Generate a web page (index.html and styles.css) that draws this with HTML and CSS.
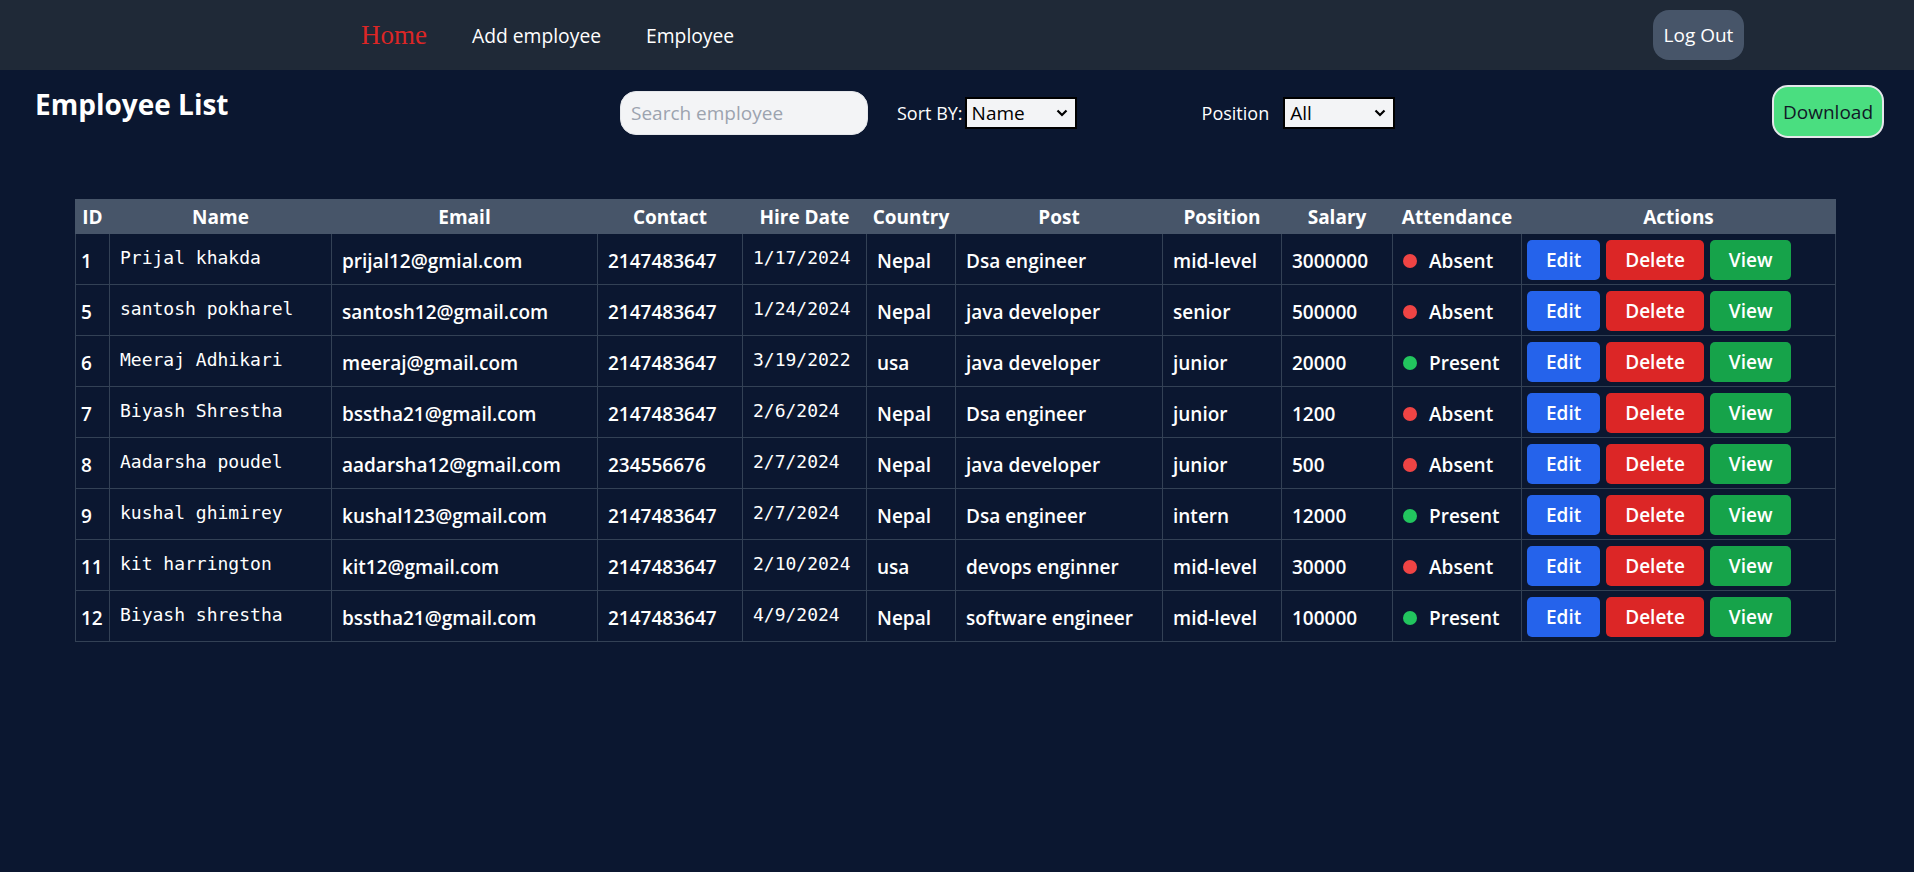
FILE: index.html
```
<!DOCTYPE html>
<html lang="en">
<head>
<meta charset="utf-8">
<title>Employee List</title>
<link rel="stylesheet" href="styles.css">
</head>
<body>
<nav class="nav">
  <div class="nav-links">
    <a class="nav-home" href="#">Home</a>
    <a class="nav-link" href="#">Add employee</a>
    <a class="nav-link" href="#">Employee</a>
  </div>
  <button class="logout">Log Out</button>
</nav>

<div class="toolbar">
  <h1 class="title">Employee List</h1>
  <div class="filters">
    <input class="search" type="text" placeholder="Search employee">
    <span class="sort-label">Sort BY:</span>
    <div class="select-wrap">
      <select class="select"><option>Name</option></select>
      <svg class="chev" width="12" height="8" viewBox="0 0 12 8"><path d="M1.5 1.5 L6 6 L10.5 1.5" fill="none" stroke="#000" stroke-width="2.2"/></svg>
    </div>
    <span class="pos-label">Position</span>
    <div class="select-wrap">
      <select class="select select-all"><option>All</option></select>
      <svg class="chev" width="12" height="8" viewBox="0 0 12 8"><path d="M1.5 1.5 L6 6 L10.5 1.5" fill="none" stroke="#000" stroke-width="2.2"/></svg>
    </div>
  </div>
  <button class="download">Download</button>
</div>

<table class="emp-table">
  <colgroup>
    <col class="c-id"><col class="c-name"><col class="c-email"><col class="c-contact"><col class="c-hire"><col class="c-country"><col class="c-post"><col class="c-position"><col class="c-salary"><col class="c-att"><col class="c-actions">
  </colgroup>
  <thead>
    <tr>
      <th>ID</th><th>Name</th><th>Email</th><th>Contact</th><th>Hire Date</th><th>Country</th><th>Post</th><th>Position</th><th>Salary</th><th>Attendance</th><th>Actions</th>
    </tr>
  </thead>
  <tbody>
    <tr>
      <td class="id">1</td><td class="mono">Prijal khakda</td><td>prijal12@gmial.com</td><td>2147483647</td><td class="mono">1/17/2024</td><td>Nepal</td><td>Dsa engineer</td><td>mid-level</td><td>3000000</td>
      <td><span class="att"><span class="dot absent"></span>Absent</span></td>
      <td class="actions"><div class="btns"><button class="btn edit">Edit</button><button class="btn del">Delete</button><button class="btn view">View</button></div></td>
    </tr>
    <tr>
      <td class="id">5</td><td class="mono">santosh pokharel</td><td>santosh12@gmail.com</td><td>2147483647</td><td class="mono">1/24/2024</td><td>Nepal</td><td>java developer</td><td>senior</td><td>500000</td>
      <td><span class="att"><span class="dot absent"></span>Absent</span></td>
      <td class="actions"><div class="btns"><button class="btn edit">Edit</button><button class="btn del">Delete</button><button class="btn view">View</button></div></td>
    </tr>
    <tr>
      <td class="id">6</td><td class="mono">Meeraj Adhikari</td><td>meeraj@gmail.com</td><td>2147483647</td><td class="mono">3/19/2022</td><td>usa</td><td>java developer</td><td>junior</td><td>20000</td>
      <td><span class="att"><span class="dot present"></span>Present</span></td>
      <td class="actions"><div class="btns"><button class="btn edit">Edit</button><button class="btn del">Delete</button><button class="btn view">View</button></div></td>
    </tr>
    <tr>
      <td class="id">7</td><td class="mono">Biyash Shrestha</td><td>bsstha21@gmail.com</td><td>2147483647</td><td class="mono">2/6/2024</td><td>Nepal</td><td>Dsa engineer</td><td>junior</td><td>1200</td>
      <td><span class="att"><span class="dot absent"></span>Absent</span></td>
      <td class="actions"><div class="btns"><button class="btn edit">Edit</button><button class="btn del">Delete</button><button class="btn view">View</button></div></td>
    </tr>
    <tr>
      <td class="id">8</td><td class="mono">Aadarsha poudel</td><td>aadarsha12@gmail.com</td><td>234556676</td><td class="mono">2/7/2024</td><td>Nepal</td><td>java developer</td><td>junior</td><td>500</td>
      <td><span class="att"><span class="dot absent"></span>Absent</span></td>
      <td class="actions"><div class="btns"><button class="btn edit">Edit</button><button class="btn del">Delete</button><button class="btn view">View</button></div></td>
    </tr>
    <tr>
      <td class="id">9</td><td class="mono">kushal ghimirey</td><td>kushal123@gmail.com</td><td>2147483647</td><td class="mono">2/7/2024</td><td>Nepal</td><td>Dsa engineer</td><td>intern</td><td>12000</td>
      <td><span class="att"><span class="dot present"></span>Present</span></td>
      <td class="actions"><div class="btns"><button class="btn edit">Edit</button><button class="btn del">Delete</button><button class="btn view">View</button></div></td>
    </tr>
    <tr>
      <td class="id">11</td><td class="mono">kit harrington</td><td>kit12@gmail.com</td><td>2147483647</td><td class="mono">2/10/2024</td><td>usa</td><td>devops enginner</td><td>mid-level</td><td>30000</td>
      <td><span class="att"><span class="dot absent"></span>Absent</span></td>
      <td class="actions"><div class="btns"><button class="btn edit">Edit</button><button class="btn del">Delete</button><button class="btn view">View</button></div></td>
    </tr>
    <tr>
      <td class="id">12</td><td class="mono">Biyash shrestha</td><td>bsstha21@gmail.com</td><td>2147483647</td><td class="mono">4/9/2024</td><td>Nepal</td><td>software engineer</td><td>mid-level</td><td>100000</td>
      <td><span class="att"><span class="dot present"></span>Present</span></td>
      <td class="actions"><div class="btns"><button class="btn edit">Edit</button><button class="btn del">Delete</button><button class="btn view">View</button></div></td>
    </tr>
  </tbody>
</table>
</body>
</html>
```
FILE: styles.css
```
* { box-sizing: border-box; }

body {
  margin: 0;
  min-height: 100vh;
  background: #0b1730;
  color: #ffffff;
  font-family: "Open Sans", "Noto Sans", sans-serif;
}

/* ---------- nav ---------- */
.nav {
  display: flex;
  align-items: center;
  justify-content: space-between;
  height: 70px;
  padding: 0 170px 0 361px;
  background: #1f2937;
}
.nav-links {
  display: flex;
  align-items: center;
  gap: 45px;
}
.nav-home {
  font-family: "Liberation Serif", "Times New Roman", serif;
  font-size: 27px;
  color: #dc2626;
  text-decoration: none;
}
.nav-link {
  font-size: 19.3px;
  color: #ffffff;
  text-decoration: none;
}
.logout {
  width: 91px;
  height: 50px;
  border: none;
  border-radius: 16px;
  background: #475569;
  color: #ffffff;
  font-family: inherit;
  font-size: 19px;
  padding: 0;
}

/* ---------- toolbar ---------- */
.toolbar {
  display: grid;
  grid-template-columns: 585px auto 1fr auto;
  align-items: center;
  padding: 15px 30px 0 35px;
}
.title {
  align-self: start;
  margin: 0;
  font-size: 28px;
  font-weight: 700;
  line-height: normal;
}
.filters {
  display: flex;
  align-items: center;
  margin-top: 3px;
}
.search {
  width: 248px;
  height: 44px;
  border: 1px solid #e5e7eb;
  border-radius: 16px;
  background: #f3f4f6;
  padding: 0 10px;
  font-family: inherit;
  font-size: 19px;
  color: #111827;
  outline: none;
}
.search::placeholder { color: #9ca3af; }
.sort-label {
  margin-left: 29px;
  margin-right: 2px;
  font-size: 18px;
}
.pos-label {
  margin-left: 125px;
  margin-right: 14px;
  font-size: 18px;
}
.select-wrap {
  position: relative;
  display: flex;
}
.select {
  appearance: none;
  -webkit-appearance: none;
  width: 112px;
  height: 32px;
  border: 2px solid #000000;
  border-radius: 0;
  background: #f3f4f6;
  padding: 0 0 0 5px;
  font-family: inherit;
  font-size: 19px;
  color: #000000;
}
.chev {
  position: absolute;
  right: 9px;
  top: 12px;
  pointer-events: none;
}
.download {
  grid-column: 4;
  width: 112px;
  height: 53px;
  border: 2px solid #e5e7eb;
  border-radius: 16px;
  background: #4ade80;
  color: #111827;
  font-family: inherit;
  font-size: 19px;
  padding: 0;
}

/* ---------- table ---------- */
.emp-table {
  margin: 61px 0 0 75px;
  width: 1760px;
  table-layout: fixed;
  border-collapse: collapse;
  border: 1px solid #334155;
}
.c-id { width: 34px; }
.c-name { width: 222px; }
.c-email { width: 266px; }
.c-contact { width: 145px; }
.c-hire { width: 124px; }
.c-country { width: 89px; }
.c-post { width: 207px; }
.c-position { width: 119px; }
.c-salary { width: 111px; }
.c-att { width: 129px; }
.c-actions { width: 314px; }

.emp-table th {
  height: 34px;
  padding: 1px 4px 0;
  background: #475569;
  border: 1px solid #475569;
  font-size: 19px;
  font-weight: 700;
  text-align: center;
  white-space: nowrap;
}
.emp-table td {
  height: 51px;
  padding: 3px 10px 0;
  border: 1px solid #334155;
  font-size: 19px;
  font-weight: 600;
  white-space: nowrap;
  vertical-align: middle;
}
.emp-table td.id { padding: 3px 5px 0; }
.emp-table td.mono {
  font-family: "DejaVu Sans Mono", "Liberation Mono", monospace;
  font-size: 18px;
  font-weight: 400;
  padding: 0 10px 3px;
}
.att {
  display: inline-flex;
  align-items: center;
  gap: 12px;
}
.dot {
  width: 14px;
  height: 14px;
  border-radius: 50%;
}
.dot.absent { background: #ef4444; }
.dot.present { background: #22c55e; }

.emp-table td.actions { padding: 1px 5px 0; }
.btns {
  display: flex;
  gap: 6px;
}
.btn {
  height: 40px;
  padding: 0 19px;
  border: none;
  border-radius: 5px;
  color: #ffffff;
  font-family: inherit;
  font-size: 19px;
  font-weight: 600;
}
.btn.edit { background: #2563eb; }
.btn.del { background: #dc2626; }
.btn.view { background: #16a34a; }
```
